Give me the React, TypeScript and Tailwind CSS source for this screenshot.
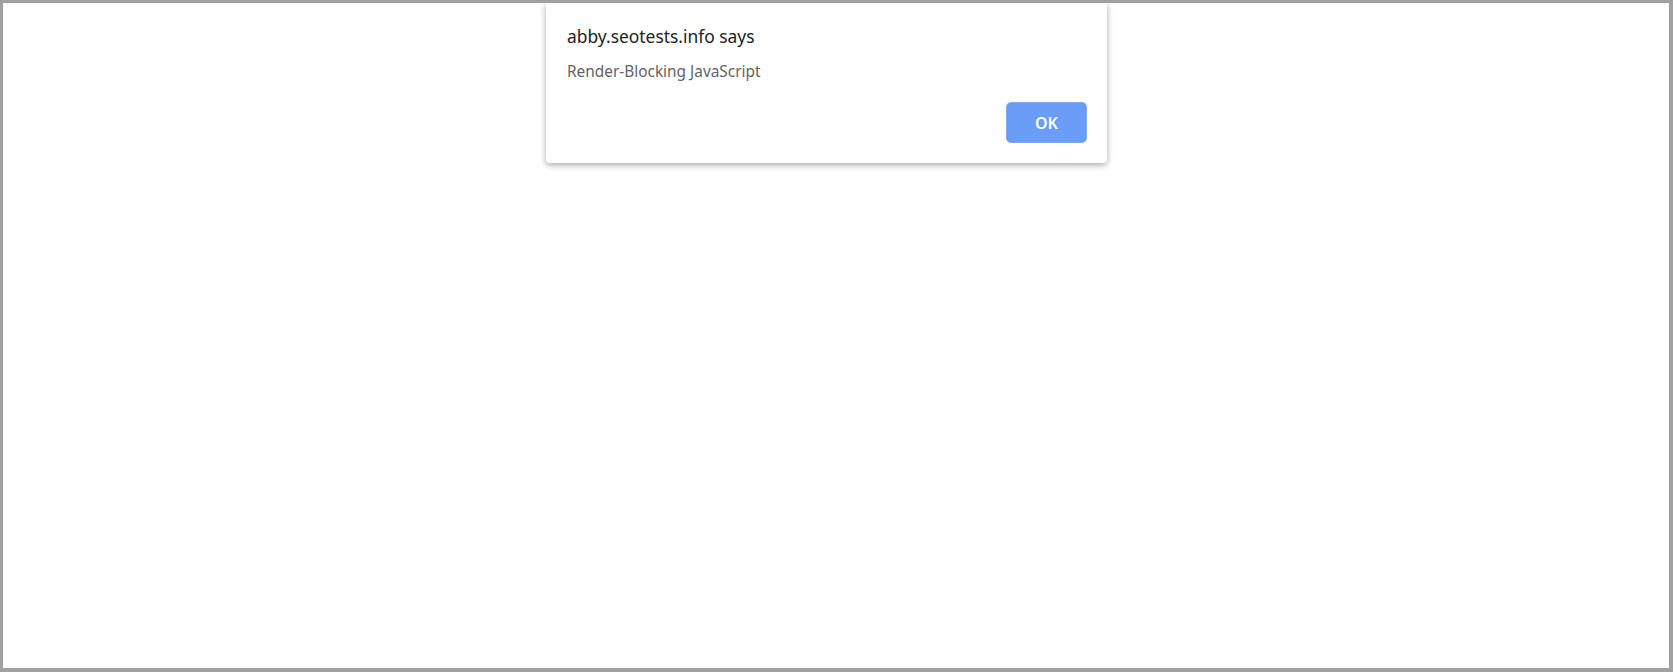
export default function App() {
  return (
    <div
      className="h-screen w-full bg-white border-t-[3px] border-l-[3px] border-r-4 border-b-4 border-[#a0a0a0] overflow-hidden"
      style={{ fontFamily: '"Noto Sans", "Open Sans", sans-serif' }}
    >
      <div className="ml-[543px] w-[561px] h-[160px] bg-white rounded-b-sm shadow-[0_2px_6px_rgba(0,0,0,0.35)] flex flex-col px-[21px] pb-[20px]">
        <h1 className="mt-[21px] text-[17.4px] leading-[24px] text-[#202124]">abby.seotests.info says</h1>
        <p className="mt-[14px] text-[15.4px] leading-[20px] text-[#5f6368]">Render-Blocking JavaScript</p>
        <div className="mt-auto flex justify-end">
          <button className="w-[81px] h-[41px] mr-[-1px] rounded-[5px] bg-[#699df7] text-white text-[16px] font-semibold border border-[#7fa9f0]">
            OK
          </button>
        </div>
      </div>
    </div>
  );
}
